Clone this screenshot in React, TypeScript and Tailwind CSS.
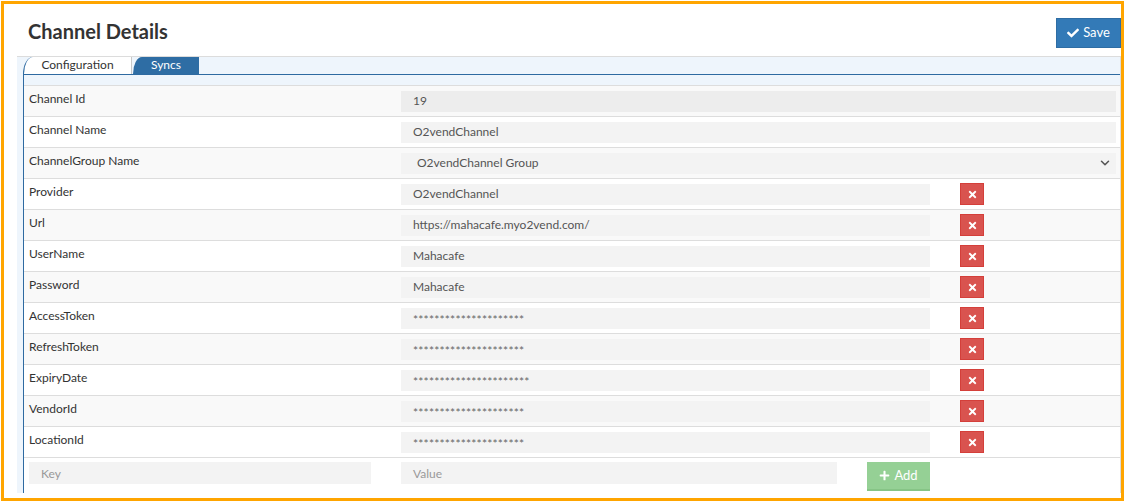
import React from "react";
import { FaCheck, FaTimes, FaPlus } from "react-icons/fa";
import { ChevronDown } from "lucide-react";

type Row = { label: string; value: string; kind: "readonly" | "full" | "select" | "del"; masked?: boolean };

const stars = (n: number) => "*".repeat(n);

const rows: Row[] = [
  { label: "Channel Id", value: "19", kind: "readonly" },
  { label: "Channel Name", value: "O2vendChannel", kind: "full" },
  { label: "ChannelGroup Name", value: "O2vendChannel Group", kind: "select" },
  { label: "Provider", value: "O2vendChannel", kind: "del" },
  { label: "Url", value: "https://mahacafe.myo2vend.com/", kind: "del" },
  { label: "UserName", value: "Mahacafe", kind: "del" },
  { label: "Password", value: "Mahacafe", kind: "del" },
  { label: "AccessToken", value: stars(21), kind: "del", masked: true },
  { label: "RefreshToken", value: stars(21), kind: "del", masked: true },
  { label: "ExpiryDate", value: stars(22), kind: "del", masked: true },
  { label: "VendorId", value: stars(21), kind: "del", masked: true },
  { label: "LocationId", value: stars(21), kind: "del", masked: true },
];

function ValueCell({ row }: { row: Row }) {
  const text = (
    <span className={row.masked ? "pt-[3px] text-[12px] tracking-[0.2px] text-[#666]" : "text-[#555]"}>{row.value}</span>
  );
  if (row.kind === "readonly") {
    return (
      <div className="flex h-[21px] w-[715px] items-center bg-[#ededed] pl-[12px]">{text}</div>
    );
  }
  if (row.kind === "full") {
    return (
      <div className="flex h-[21px] w-[715px] items-center bg-[#f3f3f3] pl-[12px]">{text}</div>
    );
  }
  if (row.kind === "select") {
    return (
      <div className="flex h-[21px] w-[715px] items-center justify-between bg-[#f3f3f3] pl-[16px] pr-[4px]">
        {text}
        <ChevronDown size={14} strokeWidth={2.6} className="text-[#555]" />
      </div>
    );
  }
  return (
    <div className="flex items-center">
      <div className="flex h-[21px] w-[529px] items-center bg-[#f3f3f3] pl-[12px]">{text}</div>
      <button className="ml-[30px] flex h-[22px] w-[24px] items-center justify-center border border-[#d43f3a] bg-[#d9534f] text-white">
        <FaTimes size={11} />
      </button>
    </div>
  );
}

export default function App() {
  return (
    <div className="h-[502px] w-[1127px] bg-white pl-px pt-px" style={{ fontFamily: "Lato, 'Open Sans', sans-serif" }}>
      <div className="flex h-[500px] w-[1123px] flex-col border-[3px] border-[#ffa500] text-[12px] text-[#333]">
        {/* header */}
        <div className="flex h-[52px] items-start justify-between">
          <h1 className="ml-[24px] mt-[13px] text-[20px] font-bold leading-[28px] text-[#333]">Channel Details</h1>
          <button className="mt-[14px] flex h-[30px] w-[65px] items-center justify-center gap-[4px] border border-[#2e6da4] bg-[#337ab7] text-[13px] text-white">
            <FaCheck size={12} />
            <span>Save</span>
          </button>
        </div>

        {/* panel */}
        <div className="ml-[13px] flex h-[437px] w-[1104px] flex-col border-r border-t border-[#dcdcdc] bg-[#eef5fc] pl-[6px]">
          {/* tabs */}
          <div className="flex h-[17px] items-end">
            <div className="flex h-[17px] w-[109px] items-center justify-center rounded-tl-[10px_17px] border-l border-r border-l-[#2e6aa1] border-r-[#c8c8c8] bg-white pb-[2px] leading-none text-[#333]">
              Configuration
            </div>
            <div className="ml-[1px] flex h-[17px] w-[66px] items-center justify-center rounded-tl-[9px_17px] bg-[#2e6da4] pb-[2px] leading-none text-white">
              Syncs
            </div>
          </div>
          {/* content */}
          <div className="flex flex-1 flex-col border-l border-t border-[#2e6aa1] pt-[10px]">
            <div className="flex flex-1 flex-col bg-white">
              {rows.map((r, i) => (
                <div
                  key={r.label}
                  className={`grid h-[31px] grid-cols-[371px_1fr] items-center border-t border-[#dddddd] ${
                    i % 2 === 0 ? "bg-[#f9f9f9]" : "bg-white"
                  }`}
                >
                  <div className="pb-[4px] pl-[5px] text-[#333]">{r.label}</div>
                  <div className="pl-[6px]">
                    <ValueCell row={r} />
                  </div>
                </div>
              ))}
              <div className="grid flex-1 grid-cols-[371px_1fr] items-start border-t border-[#dddddd] pt-[4px]">
                <div className="pl-[5px]">
                  <div className="flex h-[22px] w-[342px] items-center bg-[#f3f3f3] pl-[12px] pt-[1px] text-[#999]">Key</div>
                </div>
                <div className="flex items-start pl-[6px]">
                  <div className="flex h-[22px] w-[436px] items-center bg-[#f3f3f3] pl-[12px] pt-[1px] text-[#999]">Value</div>
                  <button className="ml-[30px] flex h-[29px] w-[63px] items-center justify-center gap-[4px] border-b-2 border-[#86c486] bg-[#95d095] text-[13px] text-white">
                    <FaPlus size={11} />
                    <span>Add</span>
                  </button>
                </div>
              </div>
            </div>
          </div>
        </div>
      </div>
    </div>
  );
}
